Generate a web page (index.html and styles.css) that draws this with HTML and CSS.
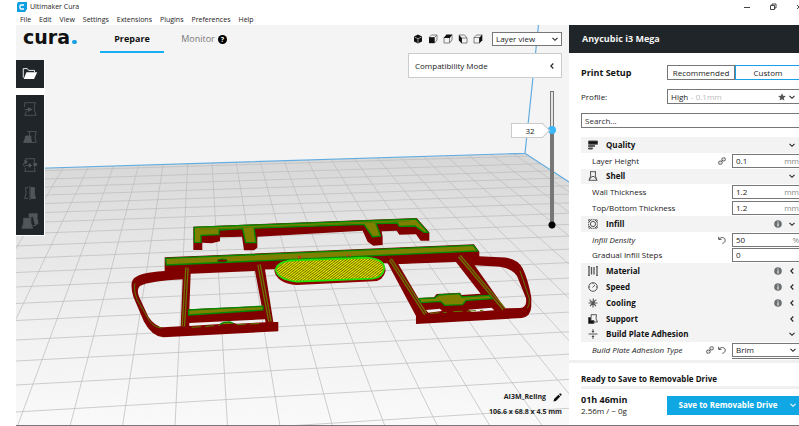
FILE: index.html
```
<!DOCTYPE html>
<html lang="en">
  <head>
    <meta charset="UTF-8" />
    <title>Ultimaker Cura</title>
    <link rel="stylesheet" href="styles.css">
  </head>
  <body>
    <!-- shared icons -->
    <svg class="defs" width="0" height="0">
      <symbol id="down" viewBox="0 0 8 8"><path d="M1.5 2.8 4 5.3 6.5 2.8" fill="none" stroke="#222" stroke-width="1.1" /></symbol>
      <symbol id="left" viewBox="0 0 8 8"><path d="M5.3 1.5 2.8 4 5.3 6.5" fill="none" stroke="#222" stroke-width="1.1" /></symbol>
      <symbol id="info" viewBox="0 0 8 8"><circle cx="4" cy="4" r="3.8" fill="#6a6e70" /><path d="M4 1.5v1.1M4 3.3v3.2" stroke="#fff" stroke-width="1.1" /></symbol>
      <symbol id="link" viewBox="0 0 8 8"><g fill="none" stroke="#666" stroke-width="1"><rect x="3.9" y=".9" width="3.4" height="3" rx="1.4" transform="rotate(-20 5.5 2.4)" /><rect x=".7" y="4.1" width="3.4" height="3" rx="1.4" transform="rotate(-20 2.4 5.6)" /><path d="M2.8 5.2 5.2 2.8" /></g></symbol>
      <symbol id="undo" viewBox="0 0 8 8"><path d="M.7.8v2.6h2.7M.9 3.2C2.8.8 7.2 1 7.2 4.2 7.2 6 6 7 4.4 7.3" fill="none" stroke="#555" stroke-width="1" /></symbol>
    </svg>

    <div class="titlebar">
      <svg class="app-icon" viewBox="0 0 10 10"><path d="M1 0h9v7L8 10H0V2z" fill="#0f9fe0" /><path d="M7 3H4Q3 3 3 4v2q0 1 1 1h3" fill="none" stroke="#fff" stroke-width="1.3" /></svg>
      <span class="app-title">Ultimaker Cura</span>
      <svg class="window-buttons" viewBox="0 0 56 10"><g fill="none" stroke="#444" stroke-width="1"><path d="M1 5.500h6M27.500 3.500h4v4h-4zM29 3V2h4v4h-1M54 3l4 4M54 7l4-4" /></g></svg>
    </div>
    <nav class="menubar">
      <a href="#">File</a><a href="#">Edit</a><a href="#">View</a><a href="#">Settings</a><a href="#">Extensions</a><a href="#">Plugins</a><a href="#">Preferences</a><a href="#">Help</a>
    </nav>

    <div class="main">
      <div class="viewport">
        <svg class="scene" viewBox="16 25 553 401" preserveAspectRatio="xMinYMin slice">
          <defs>
            <linearGradient id="floor" x1="0" y1="0" x2="0" y2="1">
              <stop offset="0" stop-color="#d8d8d8" />
              <stop offset=".3" stop-color="#e6e6e6" />
              <stop offset=".65" stop-color="#f2f2f2" />
              <stop offset="1" stop-color="#fafafa" />
            </linearGradient>
            <pattern id="hatch" width="6" height="6" patternUnits="userSpaceOnUse" patternTransform="rotate(-38)">
              <rect width="6" height="6" fill="#f4f400" /><rect width="6" height="3" fill="#6a6a00" />
            </pattern>
            <clipPath id="plate"><path d="M16 169 525 153.300 569 182V426H16z" /></clipPath>
          </defs>
          <path d="M16 169 525 153.300 569 182V426H16z" fill="url(#floor)" />
          <g clip-path="url(#plate)" fill="none">
            <path id="minor" stroke="#000" stroke-opacity=".015" stroke-width=".5" />
            <path id="major" stroke="#bdbdbd" stroke-opacity=".75" stroke-width="1" />
          </g>
          <path d="M16 169 525 153.300 569 182M525 153.300 538.500 25M16 89v5" fill="none" stroke="#62ade0" stroke-width="1.2" />

          <g transform="translate(120 200) scale(.3333)">
            <!-- rear bar -->
            <path class="wall" d="M220 80 890 54 928 97V122H902L888 103 838 104 830 92 785 94 788 110V135L760 137 743 125 728 92 412 110V143L402 151H372L366 110 300 112V124L275 130 247 128V150H220z" />
            <path class="skin" d="M223 82 888 57 924 97H912L885 78 838 79 832 69 768 71 782 108 758 111 732 73 402 84 408 128H377L368 86 297 90V104L243 106V127H223z" />
            <path class="seam" d="M240 88 870 63" />
            <!-- left and right frames -->
            <path class="wall" fill-rule="evenodd" d="M134 213Q50 218 38 240 30 255 40 290L72 365Q95 408 130 412L475 394V366H460L432 190zM188 238Q90 243 60 258 48 268 58 292L85 350Q105 380 130 382L182 379zM212 221 405 213 425 318 208 328zM208 369 435 358 437 367 350 371 330 366 300 372 208 378z" />
            <path class="wall" fill-rule="evenodd" d="M798 180 888 348V372L1205 354Q1232 350 1234 320V292Q1225 240 1208 205 1190 172 1140 172L1060 168zM835 192 1008 186 1082 281 1025 285 1020 278 950 282 942 292 895 294zM1064 196 1140 200Q1185 208 1194 235L1218 295Q1222 322 1200 324L1155 325zM918 330 960 326 966 333 925 338zM1045 329 1115 323 1123 331 1055 336z" />
            <!-- main bar -->
            <path class="wall" d="M134 172 1062 133 1078 155V174L835 192 795 190 465 208 134 216z" />
            <path class="skin" d="M137 175 1060 136 1073 153 139 195z" />
            <ellipse cx="307" cy="182" rx="15" ry="5" fill="#800000" stroke="#008a00" stroke-width="3" />
            <!-- struts -->
            <path class="strut" d="M201 203 190 379M417 194 450 365M811 178 917 342M1018 168 1152 327" />
            <path class="strut-line" d="M201 203 190 379M417 194 450 365M811 178 917 342M1018 168 1152 327" />
            <path class="seam" d="M45 250Q40 270 52 300L88 362Q102 382 125 384M1200 212 1228 295Q1230 315 1222 325" />
            <path class="skin" d="M206 330 429 319V330L206 345z" />
            <path class="skin" d="M897 296 944 294 956 285 1018 281 1026 291 1108 286 1116 296 1038 301 1028 314 974 316 962 304 904 308z" />
            <path class="skin" d="M300 373 312 367 330 366 340 371" />
            <path class="seam" d="M215 382 300 376M350 374 430 370M930 340 980 337M1000 335 1090 331" stroke-dasharray="28 12" />
            <!-- center pad -->
            <path d="M520 186 740 177Q797 180 797 212 790 243 760 244L530 255Q470 249 463 212 470 186 520 186z" fill="#900000" />
            <path d="M520 181 740 173Q793 176 793 206 788 234 758 236L530 245Q473 239 467 209 474 183 520 181z" fill="url(#hatch)" stroke="#20e000" stroke-width="5" />
            <path d="M536 176v-6h6v6M682 170v-6M690 170v-6" fill="none" stroke="#e02020" stroke-width="3" />
          </g>
        </svg>

        <header class="stage-bar">
          <div class="logo">cura<i></i></div>
          <nav class="tabs">
            <a class="tab active" href="#">Prepare</a>
            <a class="tab" href="#">Monitor <b class="help">?</b></a>
          </nav>
          <div class="cameras">
            <button aria-label="3D view"><svg viewBox="0 0 10 10"><path d="M5 .5 9 2.500v5L5 9.500 1 7.500v-5z" fill="#111" /><path d="M1.500 3 5 4.700 8.500 3M5 4.700V9" fill="none" stroke="#ccc" stroke-width=".7" /></svg></button>
            <button aria-label="Front view"><svg viewBox="0 0 10 10"><path d="M1 3.500 3.500 1H9v5L6.500 9M6.500 3.500 9 1" fill="none" stroke="#666" stroke-width=".8" /><path d="M1 3.200h5.700V9.200H1z" fill="#111" /></svg></button>
            <button aria-label="Top view"><svg viewBox="0 0 10 10"><path d="M1 3.500h5.500V9H1zM6.500 9 9 6V1" fill="none" stroke="#666" stroke-width=".8" /><path d="M.6 4 3.500.6h6L6.700 4z" fill="#111" /></svg></button>
            <button aria-label="Left view"><svg viewBox="0 0 10 10"><path d="M3.500 4H9v5H3.500zM1 1h5.500L9 4" fill="none" stroke="#666" stroke-width=".8" /><path d="M.8.8 3.900 4v5.500L.8 6.500z" fill="#111" /></svg></button>
            <button aria-label="Right view"><svg viewBox="0 0 10 10"><path d="M1 3.500h5.500V9H1zM1 3.500 3.500 1H9" fill="none" stroke="#666" stroke-width=".8" /><path d="M6.300 3.700 9.300.6v5.600L6.300 9.400z" fill="#111" /></svg></button>
          </div>
          <div class="picker view-mode">
            <select aria-label="View mode"><option>Layer view</option></select>
            <svg class="icon"><use href="#down" /></svg>
          </div>
        </header>

        <button class="compat">Compatibility Mode <svg class="icon"><use href="#left" /></svg></button>

        <aside class="tools">
          <button class="open" aria-label="Open file"><svg viewBox="0 0 20 20"><path d="M2.500 14V4H7l1.500 2H15v2" fill="none" stroke="#fff" stroke-width="1" /><path d="M6 8h12l-3.500 7.500H3z" fill="#fff" /></svg></button>
          <div class="tool-group">
            <button aria-label="Move" disabled><svg viewBox="0 0 20 20"><path d="M4 8V3h12q-3 6 1 14H4q2-3 2-5M4 10.500h5" /><path class="solid" d="M8 8.500 12 10.500 8 12.500z" /></svg></button>
            <button aria-label="Scale" disabled><svg viewBox="0 0 20 20"><path d="M7 4h10q-3 6 0 12h-5M9 4q1 3 0 5" /><path class="solid" d="M5 9h6q-.5 3 1 7H3q2-4 2-7z" /></svg></button>
            <button aria-label="Rotate" disabled><svg viewBox="0 0 20 20"><path d="M5 6V3h10v3M5 13q0 2-1 4h12q-1-2-1-4M6 6Q1 8 4 12M14 6q5 3 1 6M5 10.500h5" /><path class="solid" d="M9 8.500 12 10.500 9 12.500zM4 5l3 1-2 3zM14 8l4 1-3 3z" /></svg></button>
            <button aria-label="Mirror" disabled><svg viewBox="0 0 20 20"><path d="M10 2v16M8 4H5q2 6-1 12h4" /><path class="solid" d="M11 4h4q-1 6 1 12h-5z" /></svg></button>
            <button aria-label="Per model settings" disabled><svg viewBox="0 0 20 20"><path class="solid" d="M3 7h8q-1 5 2 11H1q3-6 2-11zM9 2h9q-1 5 1 11l-3 1q-2-4-2-9l-5 1z" /><path d="M13 15h3v-3" /></svg></button>
          </div>
        </aside>

        <div class="layers">
          <output class="layer-number">32</output>
          <input type="range" aria-label="Layer" min="0" max="44" value="32">
        </div>

        <div class="job">
          <div class="job-name">AI3M_Reling <svg viewBox="0 0 10 10"><path d="M.5 9.500 1.200 6.700 6 1.900 8.100 4 3.300 8.800zM6.700 1.200 7.500.5Q8 .1 8.500.6l.9.900q.5.500 0 1l-.7.800z" fill="#111" /></svg></div>
          <div>106.6 x 68.8 x 4.5 mm</div>
        </div>
      </div>

      <div class="sidebar">
        <h1 class="machine">Anycubic i3 Mega</h1>
        <div class="setup">
          <div class="row">
            <h2>Print Setup</h2>
            <div class="modes"><button>Recommended</button><button class="selected">Custom</button></div>
          </div>
          <div class="row">
            <label for="profile">Profile:</label>
            <div class="picker profile">
              <select id="profile"><option>High</option></select>
              <span class="hint">- 0.1mm</span>
              <svg class="star" viewBox="0 0 10 10"><path d="M5 .3 6.400 3.500 9.800 3.800 7.200 6.100 8 9.500 5 7.700 2 9.500 2.800 6.100.2 3.800 3.600 3.500z" fill="#555" /></svg>
              <svg class="icon"><use href="#down" /></svg>
            </div>
          </div>
          <input class="search" type="text" aria-label="Search settings" placeholder="Search...">
        </div>

        <div class="settings">
          <div class="category"><svg class="cat-icon" viewBox="0 0 10 10"><path d="M.5 1h9v3.200h-9zM.5 5.400h6v1.200h-6zM.5 8h4v1h-4z" fill="#111" /></svg><h3>Quality</h3><svg class="icon"><use href="#down" /></svg></div>
          <div class="setting"><label for="layer-height">Layer Height</label><svg class="icon"><use href="#link" /></svg><div class="field"><input id="layer-height" type="text" value="0.1"><span>mm</span></div></div>
          <div class="category"><svg class="cat-icon" viewBox="0 0 10 10"><path d="M2 .7h6M2.500.7q1 4.300-1.500 8.600h8Q6.500 5 7.500.7M1 9.300q2-4 4-4t4 4" /></svg><h3>Shell</h3><svg class="icon"><use href="#down" /></svg></div>
          <div class="setting"><label for="wall">Wall Thickness</label><div class="field"><input id="wall" type="text" value="1.2"><span>mm</span></div></div>
          <div class="setting"><label for="top-bottom">Top/Bottom Thickness</label><div class="field"><input id="top-bottom" type="text" value="1.2"><span>mm</span></div></div>
          <div class="category"><svg class="cat-icon" viewBox="0 0 10 10"><rect x=".7" y=".7" width="8.600" height="8.600" stroke-dasharray="1.500 .7" /><path d="M1 3 3 1M7 1l2 2M1 7l2 2M9 7 7 9" /><circle cx="5" cy="5" r="2.600" /></svg><h3>Infill</h3><svg class="icon"><use href="#info" /></svg><svg class="icon"><use href="#down" /></svg></div>
          <div class="setting changed"><label for="density">Infill Density</label><svg class="icon"><use href="#undo" /></svg><div class="field"><input id="density" type="text" value="50"><span>%</span></div></div>
          <div class="setting"><label for="gradual">Gradual Infill Steps</label><div class="field"><input id="gradual" type="text" value="0"></div></div>
          <div class="category"><svg class="cat-icon" viewBox="0 0 10 10"><path d="M1 .5v9M3.500 1v7.500M6 1v7.500M9 .5v9" stroke-width="1.300" /><path d="M0 .7h2M8 .7h2M0 9.300h2M8 9.300h2" /></svg><h3>Material</h3><svg class="icon"><use href="#info" /></svg><svg class="icon"><use href="#left" /></svg></div>
          <div class="category"><svg class="cat-icon" viewBox="0 0 10 10"><circle cx="5" cy="5" r="4.300" /><path d="M4.500 5.500 7 3M5 1v1M1 5h1M8 5h1" /></svg><h3>Speed</h3><svg class="icon"><use href="#info" /></svg><svg class="icon"><use href="#left" /></svg></div>
          <div class="category"><svg class="cat-icon" viewBox="0 0 10 10"><path d="M5 .5Q6 2 5 3.500V9.500M.5 5h9M2 1.500q0 2 1.500 2L8 8M8.500 2Q6.500 2 6.500 3.500L2 8" stroke-width="1.100" /></svg><h3>Cooling</h3><svg class="icon"><use href="#info" /></svg><svg class="icon"><use href="#left" /></svg></div>
          <div class="category"><svg class="cat-icon" viewBox="0 0 10 10"><path d="M3 .7h5.500Q7 5 9.500 8H6M3 .7q.5 2 0 3" /><path d="M.5 3.500h2.500v3h3v3H.5z" fill="#111" /></svg><h3>Support</h3><svg class="icon"><use href="#left" /></svg></div>
          <div class="category"><svg class="cat-icon" viewBox="0 0 10 10"><path d="M.5 5h9M5 0v3M5 10V7" /><path d="M3.500 2h3L5 4zM3.500 8h3L5 6z" fill="#444" stroke="none" /></svg><h3>Build Plate Adhesion</h3><svg class="icon"><use href="#down" /></svg></div>
          <div class="setting changed"><label for="adhesion">Build Plate Adhesion Type</label><svg class="icon"><use href="#link" /></svg><svg class="icon"><use href="#undo" /></svg><div class="field picker"><select id="adhesion"><option>Brim</option></select><svg class="icon"><use href="#down" /></svg></div></div>
          <div class="next-field"></div>
        </div>

        <footer class="output">
          <p class="status">Ready to Save to Removable Drive</p>
          <div class="row">
            <div><strong class="time">01h 46min</strong><span class="usage">2.56m / ~ 0g</span></div>
            <button class="save"><span>Save to Removable Drive</span><svg class="icon" viewBox="0 0 8 8"><path d="M1.500 2.800 4 5.300 6.500 2.800" fill="none" stroke="#fff" stroke-width="1.100" /></svg></button>
          </div>
        </footer>
      </div>
    </div>
    <script src="scene.js"></script>
  </body>
</html>
```

FILE: styles.css
```
* {
  box-sizing: border-box;
}

body {
  margin: 0;
  padding-left: 16px;
  height: 100vh;
  display: flex;
  flex-direction: column;
  overflow: hidden;
  background: #fff;
  color: #222;
  font: 8px/10px "Open Sans", sans-serif;
}

button,
input,
select {
  font: inherit;
  color: inherit;
  margin: 0;
  padding: 0;
  border: 0;
  border-radius: 0;
  background: none;
  appearance: none;
  outline: none;
}

a {
  color: inherit;
  text-decoration: none;
}

h1,
h2,
h3,
p {
  margin: 0;
}

.defs {
  position: absolute;
}

.icon {
  width: 8px;
  height: 8px;
  flex: none;
}

/* window frame */
.titlebar {
  display: flex;
  align-items: center;
  height: 14px;
  padding-left: 1px;
  gap: 3px;
  font-size: 7px;
  flex: none;
}

.app-icon {
  width: 10px;
  height: 10px;
}

.window-buttons {
  width: 56px;
  height: 10px;
  margin-left: auto;
}

.menubar {
  display: flex;
  gap: 8px;
  height: 11px;
  padding: 1px 4px 0;
  font-size: 7px;
  flex: none;
}

.main {
  display: flex;
  flex: 1;
  min-height: 0;
  border-bottom: 1px solid #777;
}

/* 3D view */
.viewport {
  position: relative;
  flex: 1;
  min-width: 0;
  background: #f4f4f4;
  overflow: hidden;
}

.scene {
  position: absolute;
  inset: 0;
  width: 100%;
  height: 100%;
}

.wall {
  fill: #800000;
}

.skin {
  fill: #808000;
  stroke: #008a00;
  stroke-width: 4;
}

.seam {
  fill: none;
  stroke: #5a7a00;
  stroke-width: 3;
}

.strut {
  stroke: #6b7000;
  stroke-width: 11;
}

.strut-line {
  stroke: #800000;
  stroke-width: 3;
}

.stage-bar {
  position: relative;
  display: flex;
  align-items: center;
  height: 28px;
  padding: 0 7px;
}

.logo {
  font: bold 19px/20px "DejaVu Sans", sans-serif;
  color: #111;
  width: 77px;
  padding-bottom: 5px;
}

.logo i {
  display: inline-block;
  width: 5px;
  height: 4px;
  margin-left: 2px;
  border-radius: 2px;
  background: #1aa0e0;
}

.tabs {
  display: flex;
  align-self: stretch;
}

.tab {
  display: flex;
  align-items: center;
  justify-content: center;
  gap: 3px;
  width: 64px;
  padding-top: 2px;
  margin-right: 8px;
  font-size: 9px;
  color: #777;
  border-bottom: 2px solid transparent;
}

.tab.active {
  color: #111;
  font-weight: bold;
  border-color: #18aef0;
}

.help {
  width: 9px;
  border-radius: 5px;
  background: #000;
  color: #fff;
  font-size: 7px;
  line-height: 9px;
  text-align: center;
}

.cameras {
  display: flex;
  gap: 5px;
  margin-left: auto;
}

.cameras button,
.cameras svg {
  display: block;
  width: 10px;
  height: 10px;
}

.picker {
  display: flex;
  align-items: center;
  background: #fff;
  border: 1px solid #777;
  padding: 0 2px 0 3px;
}

.picker select {
  flex: 1;
  min-width: 0;
}

.view-mode {
  width: 70px;
  height: 14px;
  margin-left: 9px;
}

.compat {
  position: absolute;
  top: 28px;
  right: 7px;
  display: flex;
  align-items: center;
  justify-content: space-between;
  width: 154px;
  height: 25px;
  padding: 0 5px 0 6px;
  background: #fff;
  border: 1px solid #ccc;
}

.tools {
  position: absolute;
  left: 0;
  top: 35px;
  width: 29px;
  border: solid #fff;
  border-width: 0 1px 1px 0;
  background: #fff;
}

.tools button {
  display: flex;
  align-items: center;
  justify-content: center;
  width: 28px;
  height: 28px;
  background: #1f2528;
}

.tools svg {
  width: 18px;
  height: 18px;
}

.tool-group {
  margin-top: 7px;
}

.tool-group svg {
  fill: none;
  stroke: #50565a;
}

.tool-group .solid {
  fill: #50565a;
}

.layers {
  position: absolute;
  top: 66px;
  right: 13px;
  height: 138px;
  display: flex;
}

.layer-number {
  position: relative;
  width: 32px;
  height: 15px;
  margin: 32px 5px 0 0;
  padding-left: 6px;
  background: #fff;
  border: 1px solid #ccc;
  line-height: 13px;
  text-align: center;
}

.layer-number::after {
  content: "";
  position: absolute;
  right: -6px;
  top: 1px;
  width: 10px;
  height: 10px;
  background: linear-gradient(45deg, transparent 50%, #fff 50%);
  border: solid #ccc;
  border-width: 1px 1px 0 0;
  transform: rotate(45deg);
}

.layers input {
  writing-mode: vertical-lr;
  direction: rtl;
  width: 8px;
  height: 138px;
  background:
    radial-gradient(circle at 4px 134px, #000 3px, transparent 4px),
    linear-gradient(#e4e4e4, #e4e4e4) 3px 1px / 2px 36px no-repeat,
    linear-gradient(#777, #777) 2px 0 / 4px 135px no-repeat;
}

.layers input::-webkit-slider-thumb {
  appearance: none;
  width: 8px;
  height: 8px;
  border-radius: 4px;
  background: #3ab8f8;
}

.job {
  position: absolute;
  right: 7px;
  bottom: 8px;
  font-size: 7px;
  font-weight: bold;
  text-align: right;
}

.job-name {
  display: flex;
  justify-content: flex-end;
  align-items: center;
  gap: 7px;
  margin-bottom: 5px;
}

.job-name svg {
  width: 9px;
  height: 9px;
}

/* right panel, runs slightly past the window edge */
.sidebar {
  width: 232px;
  margin-right: -2px;
  flex: none;
  display: flex;
  flex-direction: column;
}

.machine {
  background: #1f2528;
  color: #f4f4f4;
  font-size: 9px;
  line-height: 28px;
  padding-left: 13px;
}

.setup {
  padding: 12px 0 9px 12px;
  display: flex;
  flex-direction: column;
  gap: 9px;
}

.row {
  display: flex;
  align-items: center;
  justify-content: space-between;
}

h2 {
  font-size: 9px;
  color: #111;
}

.modes {
  display: flex;
}

.modes button {
  width: 68px;
  height: 15px;
  border: 1px solid #777;
}

.modes button.selected {
  width: 66px;
  border-color: #1aa0e6;
}

.profile {
  width: 134px;
  height: 15px;
}

.profile select {
  flex: none;
}

.hint {
  color: #bbb;
  margin: 0 auto 0 2px;
}

.star {
  width: 8px;
  height: 8px;
  margin-right: 2px;
}

.profile .icon,
.settings .field .icon {
  margin-right: 2px;
}

.search {
  height: 15px;
  padding-left: 3px;
  border: 1px solid #777;
}

.search::placeholder {
  color: #333;
}

.settings {
  flex: 1;
  display: grid;
  grid-template-rows: repeat(14, 1fr) 2px;
  padding-left: 12px;
  overflow: hidden;
}

.category,
.setting {
  display: flex;
  align-items: center;
  gap: 4px;
  min-height: 0;
}

.category {
  background: #f3f3f3;
  padding: 0 5px 0 7px;
  gap: 6px;
}

.cat-icon {
  width: 10px;
  height: 10px;
  fill: none;
  stroke: #555;
  stroke-width: 1;
}

.category h3 {
  flex: 1;
  font-size: 8px;
  color: #111;
  padding-left: 2px;
}

.setting label {
  flex: 1;
  padding-left: 11px;
}

.changed label {
  font-style: italic;
}

.field {
  display: flex;
  align-items: center;
  width: 69px;
  height: 14px;
  margin-left: 2px;
  padding: 0 1px 0 3px;
  border: 1px solid #777;
}

.field input {
  flex: 1;
  min-width: 0;
}

.field span {
  color: #888;
}

.next-field {
  width: 69px;
  margin-left: auto;
  border-top: 1px solid #777;
}

.output {
  border-top: 3px solid #f0f0f0;
  padding: 10px 0 9px 12px;
}

.status {
  padding: 1px 0 2px;
  border-bottom: 3px solid #f0f0f0;
  margin-bottom: 5px;
  font-weight: bold;
  color: #111;
}

.time,
.usage {
  display: block;
}

.time {
  font-size: 9px;
  line-height: 12px;
  color: #111;
}

.save {
  display: flex;
  align-items: center;
  width: 134px;
  height: 19px;
  padding-right: 4px;
  background: #10a8e4;
  color: #fff;
  font-weight: bold;
}

.save span {
  flex: 1;
}
```

FILE: scene.js
```
// build plate grid, 10mm lines with faint 1mm lines in between
const rows = [171.5, 180, 188, 196, 204.5, 213.5, 223, 234, 246, 258.5, 272.5, 287, 303.5, 320.5, 340, 361, 385, 412, 443, 478];

function depthLine(u) {
  const top = (25.57 * u + 63.3) / (1 + 0.003685 * u);
  const bottom = 175 + 52.5 * (u - 5);
  return `M${top} ${169 - 0.0308 * (top - 16)}L${bottom} 426`;
}

function crossLine(y) {
  const slope = 0.03 + (y - 170) * 0.00012;
  return `M16 ${y}L569 ${y - slope * 553}`;
}

let major = "";
let minor = "";

for (let u = -2; u <= 20; u++) {
  major += depthLine(u);
  for (let i = 1; i < 10; i++) minor += depthLine(u + i / 10);
}

rows.forEach((y, n) => {
  major += crossLine(y);
  if (n < rows.length - 1) {
    for (let i = 1; i < 10; i++) minor += crossLine(y + (rows[n + 1] - y) * i / 10);
  }
});

document.getElementById("major").setAttribute("d", major);
document.getElementById("minor").setAttribute("d", minor);
```
